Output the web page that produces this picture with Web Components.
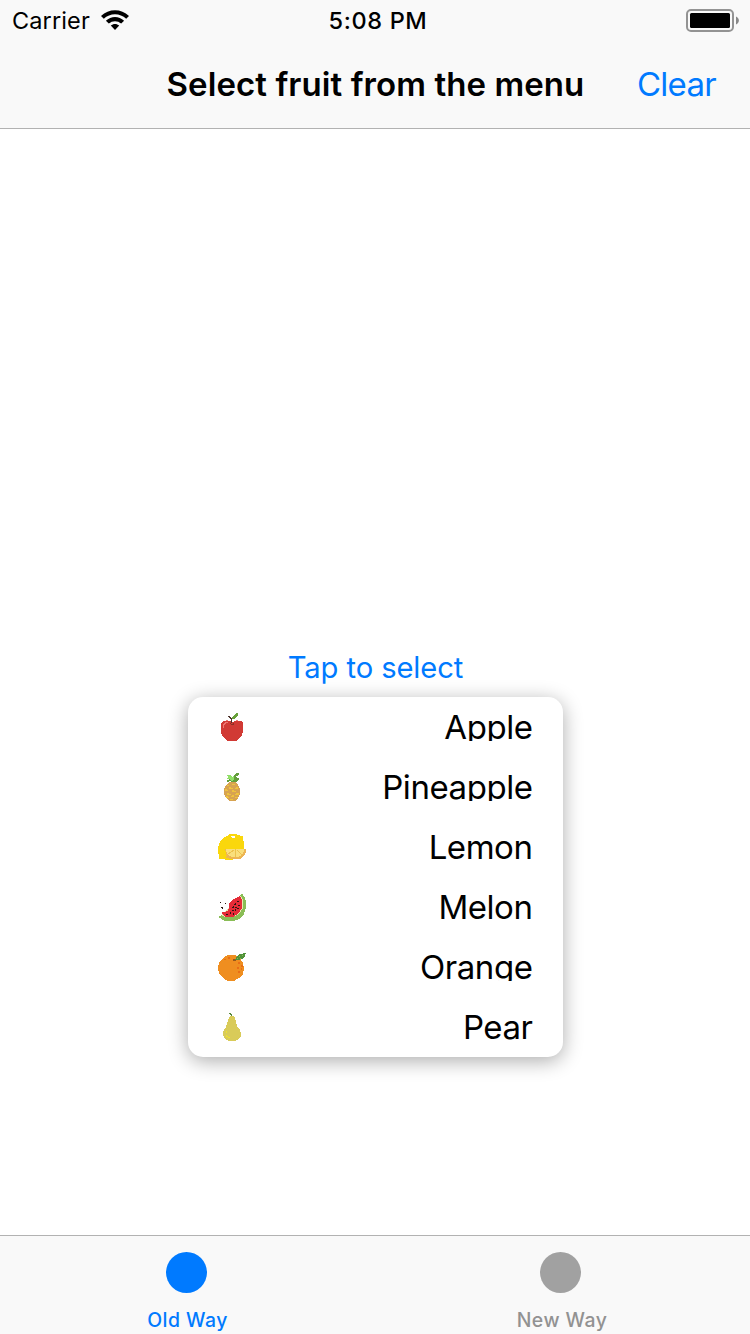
<!DOCTYPE html>
<html lang="en">
<head>
<meta charset="utf-8">
<title>Select fruit</title>
<style>
html,body{margin:0;height:100%;background:#fff;overflow:hidden;font-family:Inter,"Liberation Sans",sans-serif}
</style>
</head>
<body>
<fruit-app></fruit-app>
<script>
function define(name, html) {
  customElements.define(name, class extends HTMLElement {
    constructor() {
      super();
      const t = document.createElement('template');
      t.innerHTML = html;
      this.attachShadow({mode: 'open'}).appendChild(t.content.cloneNode(true));
    }
  });
}

define('status-bar', `
<style>
:host{display:grid;grid-template-columns:1fr auto 1fr;align-items:center;height:41px;padding:0 11px 0 12px;box-sizing:border-box;font-size:23.5px;line-height:40px;color:#000}
.left{display:flex;align-items:center;gap:11px;letter-spacing:.12px}
.time{font-weight:500;letter-spacing:.65px;margin-left:5px}
.right{justify-self:end;display:flex}
svg{display:block}
.left svg{margin-top:-1px}
</style>
<div class="left"><span>Carrier</span>
<svg width="28" height="20" viewBox="0 0 28 20"><path d="M0 5.9C7.8-1.8 20.2-1.8 28 5.9L25.2 8.7C19 2.6 9 2.6 2.8 8.7Z"/><path d="M4.9 10.8C10 5.7 18 5.7 23.1 10.8L20.2 13.6C16.8 10.3 11.2 10.3 7.8 13.6Z"/><path d="M9.8 15.6C12.2 13.3 15.8 13.3 18.2 15.6L14 20Z"/></svg></div>
<span class="time">5:08 PM</span>
<div class="right"><svg width="53" height="23" viewBox="0 0 53 23"><rect x="1" y="1" width="46" height="21" rx="4" fill="none" stroke="#939393" stroke-width="2"/><rect x="4" y="4" width="40" height="15" rx="1.5"/><path d="M50 7.5C53.8 9 53.8 14 50 15.5Z" fill="#888"/></svg></div>`);

define('nav-bar', `
<style>
:host{display:grid;grid-template-columns:1fr auto 1fr;align-items:center;height:85px;padding:0 34px 2px;box-sizing:content-box;border-bottom:1px solid #b2b2b2;font-size:33px;line-height:40px;white-space:nowrap}
h1{all:unset;grid-column:2;font-weight:600;letter-spacing:.08px;padding-left:1px}
.action{justify-self:end;color:#007aff;letter-spacing:-.7px}
</style>
<h1><slot></slot></h1><span class="action"><slot name="action"></slot></span>`);

define('fruit-row', `
<style>
:host{display:flex;justify-content:space-between;padding:16px 30px;height:28px;font-size:33px;line-height:28px;letter-spacing:-.45px}
.label{height:28px;overflow:hidden;padding-left:4px}
::slotted(svg){display:block;width:28px;height:28px;shape-rendering:crispEdges}
</style>
<slot name="icon"></slot><span class="label"><slot></slot></span>`);

define('drop-menu', `
<style>
:host{display:block;width:375px;background:#fff;border-radius:15px;box-shadow:0 4px 20px rgba(0,0,0,.33)}
</style><slot></slot>`);

define('tab-item', `
<style>
:host{display:flex;flex-direction:column;align-items:center;width:120px;padding-top:16px;color:#929292;--dot:#a1a1a1;font-size:19.4px;font-weight:500;line-height:24px;letter-spacing:.48px}
:host([active]){color:#007aff;--dot:#007aff}
.dot{width:41px;height:41px;border-radius:50%;background:var(--dot);margin:0 2px 15px 0}
.label{padding-left:2px}
:host([active]) .label{padding-left:1px}
</style><div class="dot"></div><span class="label"><slot></slot></span>`);

define('tab-bar', `
<style>
:host{display:flex;gap:254px;height:98px;padding-left:127px;background:#f9f9f9;border-top:1px solid #b2b2b2}
</style><slot></slot>`);

define('fruit-app', `
<style>
:host{display:flex;flex-direction:column;width:750px;height:1334px;overflow:hidden}
header{background:#f9f9f9}
main{flex:1;display:flex;flex-direction:column;align-items:center;padding-top:520px}
.trigger{color:#007aff;font-size:29.2px;line-height:38px;letter-spacing:-.1px;margin-bottom:10px;padding-left:1px}
</style>
<header><status-bar></status-bar><nav-bar>Select fruit from the menu<span slot="action">Clear</span></nav-bar></header>
<main>
<span class="trigger">Tap to select</span>
<drop-menu>
<fruit-row><svg slot="icon" viewBox="0 0 28 28"><path fill="#d13a34" d="M6 8H11L14 9L17 8H23L25 10V19L24 22L22 25L18 28H10L6 25L4 22L3 19V10Z"/><path fill="#ef7771" d="M8 7h2v1H8zM18 7h2v1h-2zM5 11h1v-1h1v-1h3v1H8v1H7v1H6v3H5z"/><path fill="#8d3025" d="M12 10h1v1h2v-1h1v2h-3v-1h-1z"/><path fill="#4e332c" d="M10 3h2v1h1v1h1v5h-1V6h-1V5h-1V4h-1z"/><path fill="#67a13a" d="M14 6V4l2-2 2-2h2v2l-2 3-3 1z"/></svg>Apple</fruit-row>
<fruit-row><svg slot="icon" viewBox="0 0 28 28"><path fill="#d7a351" d="M11 9h6l3 3 2 4v5l-2 4-3 3h-6l-3-3-2-4v-5l2-4z"/><path fill="#efc33d" d="M9 12h2v1H9zM14 11h3v1h-3zM11 14h2v1h2v1h-4zM18 14h2v2h-3v-1h1zM7 16h2v1h1v1H7zM14 17h2v1h2v1h-4zM9 20h2v1h2v1H9zM18 20h3v2h-4v-1h1zM14 22h2v2h-3v-1h1zM8 23h2v1h1v1H8zM18 24h2v1h-3v-1zM12 26h3v1h-3z"/><path fill="#649e3c" d="M9 9V7l4-1 3-4 2-2h3v2l-4 2 4 1v2l-3 2h-4l-2-1z"/><path fill="#91df68" d="M8 2h4l2 2 2-2v5l-3 1-1-2H8l3-2z"/></svg>Pineapple</fruit-row>
<fruit-row><svg slot="icon" viewBox="0 0 28 28"><path fill="#fad70c" d="M12 1h7v1h3v1h3v3l1 3v10l-6 6h-5v2H7v-1H1v-4L0 20v-5l1-4 2-4 3-3 3-1z"/><path fill="#fff" d="M13 3h4v2h-3V4h-1z"/><path fill="#edb553" d="M7 16h21v3l-2 4-4 3H11v-1H8v-2h1l-1-3z"/><path fill="#f9df7c" d="M8 16h18v2l-2 4-4 2h-6l-4-2-2-4z"/><path stroke="#edc24c" fill="none" d="M17.5 16v8M16 17l-6 4M19 17l5 5"/></svg>Lemon</fruit-row>
<fruit-row><svg slot="icon" viewBox="0 0 28 28"><path fill="#8abd56" d="M24 0l3 5 1 4v6l-2 6-5 5-6 2H7l-7-4 4-2z"/><path fill="#e9e6af" d="M23 2.5l2 4.5v8l-4 6-6 3H7l-4-2z"/><path fill="#e52b37" d="M22 3l2 4v8l-4 6-5 3H7l-3-3v-2h4v-1h2v-2h1v-6l5-4z"/><path fill="#2c1712" d="M19 8h2v1h-2zM16 11h1v-1h1v2h-2zM20 12h2v1h-2zM14 14h1v-1h1v2h-2zM17 14h2v1h-2zM19 15h2v1h-2zM14 17h2v1h-2zM17 16h1v2h-1zM12 19h1v2h-1zM15 20h1v2h-1zM8 21h2v1H8zM2 9h1v1H2zM7 10h1v1H7zM3 14h2v2H4v-1H3z"/></svg>Melon</fruit-row>
<fruit-row><svg slot="icon" viewBox="0 0 28 28"><path fill="#ef8e20" d="M10 2h7l5 3 3 5 1 5-1 6-4 4-5 3h-6l-5-3-4-5-1-5 1-5 4-5z"/><path fill="#e96d16" d="M10 4h2v2h-2zM6 6h2v1H6zM20 9h2v2h-2zM23 12h2v2h-2zM19 14h2v2h-2zM23 15h1v2h-1zM20 18h2v2h-2z"/><path fill="#96571c" d="M15 6h3v2h-3z"/><path fill="#51933a" d="M17 7l2-4 3-2 6-1-1 3-3 3-4 1z"/><path fill="#8bb553" d="M19 5h1v1h-1zM21 3h1v1h-1zM24 2h1v1h-1zM22 5h1v1h-1z"/></svg>Orange</fruit-row>
<fruit-row><svg slot="icon" viewBox="0 0 28 28"><path fill="#d9cb59" d="M12 3h4l2 5 1 5 3 4 1 3v3l-3 4-4 1h-5l-4-2-2-4v-3l3-5 2-7z"/><path fill="#58883c" d="M11 0h2v1h1v2h-1V2h-1V1h-1z"/><path fill="#efe22e" d="M8 18h1v2H8zM8 22h1v1h1v1h2v1h-2v-1H8z"/></svg>Pear</fruit-row>
</drop-menu>
</main>
<tab-bar><tab-item active>Old Way</tab-item><tab-item>New Way</tab-item></tab-bar>`);
</script>
</body>
</html>
